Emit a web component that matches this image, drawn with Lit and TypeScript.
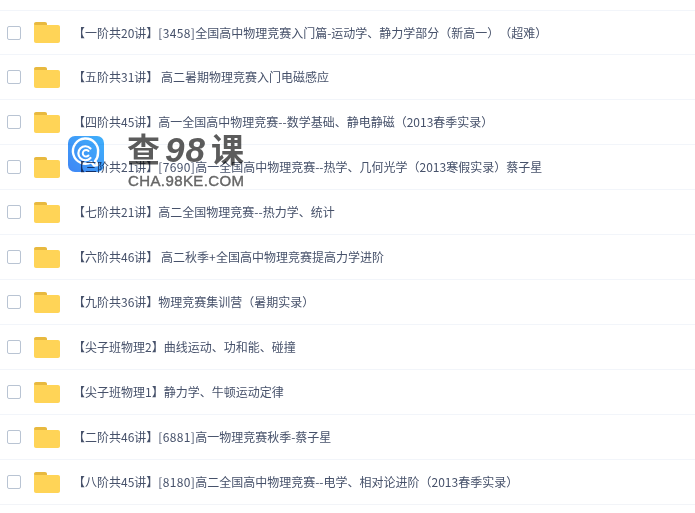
import { LitElement, html, css } from "lit";
import { customElement } from "lit/decorators.js";

const rows = [
  "【一阶共20讲】[3458]全国高中物理竞赛入门篇-运动学、静力学部分（新高一）（超难）",
  "【五阶共31讲】 高二暑期物理竞赛入门电磁感应",
  "【四阶共45讲】高一全国高中物理竞赛--数学基础、静电静磁（2013春季实录）",
  "【三阶共21讲】[7690]高一全国高中物理竞赛--热学、几何光学（2013寒假实录）蔡子星",
  "【七阶共21讲】高二全国物理竞赛--热力学、统计",
  "【六阶共46讲】 高二秋季+全国高中物理竞赛提高力学进阶",
  "【九阶共36讲】物理竞赛集训营（暑期实录）",
  "【尖子班物理2】曲线运动、功和能、碰撞",
  "【尖子班物理1】静力学、牛顿运动定律",
  "【二阶共46讲】[6881]高一物理竞赛秋季-蔡子星",
  "【八阶共45讲】[8180]高二全国高中物理竞赛--电学、相对论进阶（2013春季实录）",
];

const parts = (t: string) =>
  t.split(/(\[\d+\]|\+)/).map((p, i) => (i % 2 ? html`<span class="code">${p}</span>` : p));

@customElement("app-root")
export class AppRoot extends LitElement {
  static styles = css`
    :host {
      display: block;
      position: relative;
      width: 695px;
      height: 513px;
      overflow: hidden;
      background: #fff;
      font-family: "Noto Sans CJK SC", "Noto Sans", sans-serif;
    }
    .list {
      padding-top: 10px;
    }
    .row {
      display: flex;
      align-items: center;
      height: 44px;
      border-top: 1px solid #f2f5fa;
    }
    .row:first-child {
      height: 43px;
    }
    .row:last-child {
      border-bottom: 1px solid #f2f4f8;
    }
    .check {
      width: 14px;
      height: 14px;
      box-sizing: border-box;
      margin-left: 7px;
      border: 1px solid #b9c4d3;
      border-radius: 2px;
      background: #fff;
      flex: none;
    }
    .folder {
      flex: none;
      display: block;
      margin-left: 13px;
    }
    .name {
      margin-left: 13px;
      font-size: 12px;
      line-height: 20px;
      color: #46516a;
      white-space: pre;
      text-spacing-trim: space-all;
    }
    .code {
      letter-spacing: 0.35px;
    }
    .mark {
      position: absolute;
      left: 68px;
      top: 136px;
      display: flex;
      gap: 23px;
      color: #555;
      mix-blend-mode: multiply;
    }
    .logo {
      display: block;
      flex: none;
    }
    .brand {
      display: flex;
      flex-direction: column;
      align-items: flex-start;
      margin-top: -8px;
    }
    .title {
      display: flex;
      align-items: center;
      height: 40px;
      color: #5c5c5c;
      font-family: "Noto Sans CJK SC", sans-serif;
      font-size: 33px;
      font-weight: 700;
      line-height: 40px;
      gap: 5px;
    }
    .nums {
      font-family: "Liberation Sans", sans-serif;
      font-style: italic;
      font-weight: 700;
      font-size: 35px;
      line-height: 40px;
      margin-top: 4px;
      letter-spacing: 1px;
    }
    .en {
      font-family: "Liberation Sans", sans-serif;
      font-size: 15px;
      font-weight: 400;
      line-height: 16px;
      letter-spacing: 0.4px;
      -webkit-text-stroke: 0.4px #666;
      color: #666;
      margin-top: 5px;
      margin-left: 1px;
      white-space: pre;
    }
  `;

  render() {
    return html`
      <div class="list">
        ${rows.map(
          (t) => html`
            <div class="row">
              <span class="check"></span>
              <svg class="folder" width="26" height="21" viewBox="0 0 26 21">
                <path d="M2 0h9c1.200 0 2 .8 2 2v2H0V2C0 .8 .8 0 2 0z" fill="#e8b93f" />
                <path d="M2 3h22c1.200 0 2 .8 2 2v14c0 1.200-.8 2-2 2H2c-1.200 0-2-.8-2-2V1.500C0 2.500 1 3 2 3z" fill="#ffd457" />
              </svg>
              <span class="name">${parts(t)}</span>
            </div>
          `
        )}
      </div>
      <div class="mark">
        <svg class="logo" width="36" height="36" viewBox="0 0 36 36">
          <defs>
            <linearGradient id="g" x1="0" y1="1" x2="1" y2="0">
              <stop offset="0" stop-color="#3f86f5" />
              <stop offset="1" stop-color="#3fb0fb" />
            </linearGradient>
          </defs>
          <rect width="36" height="36" rx="7" fill="url(#g)" />
          <path d="M26 29.500l-2.600-3.200A12.600 12.600 0 1 1 30 17c0 3.400-1 6-3 8l3 4z" fill="none" stroke="#fff" stroke-width="2.400" stroke-linejoin="round" />
          <path d="M22.500 12.500A7 7 0 1 0 22.500 22" fill="none" stroke="#fff" stroke-width="2.200" stroke-linecap="round" />
          <path d="M20.500 15a3.300 3.300 0 1 0 0 4.500" fill="none" stroke="#fff" stroke-width="2" stroke-linecap="round" />
        </svg>
        <div class="brand">
          <div class="title"><span>查</span><span class="nums">98</span><span>课</span></div>
          <span class="en">CHA.98KE.COM</span>
        </div>
      </div>
    `;
  }
}
